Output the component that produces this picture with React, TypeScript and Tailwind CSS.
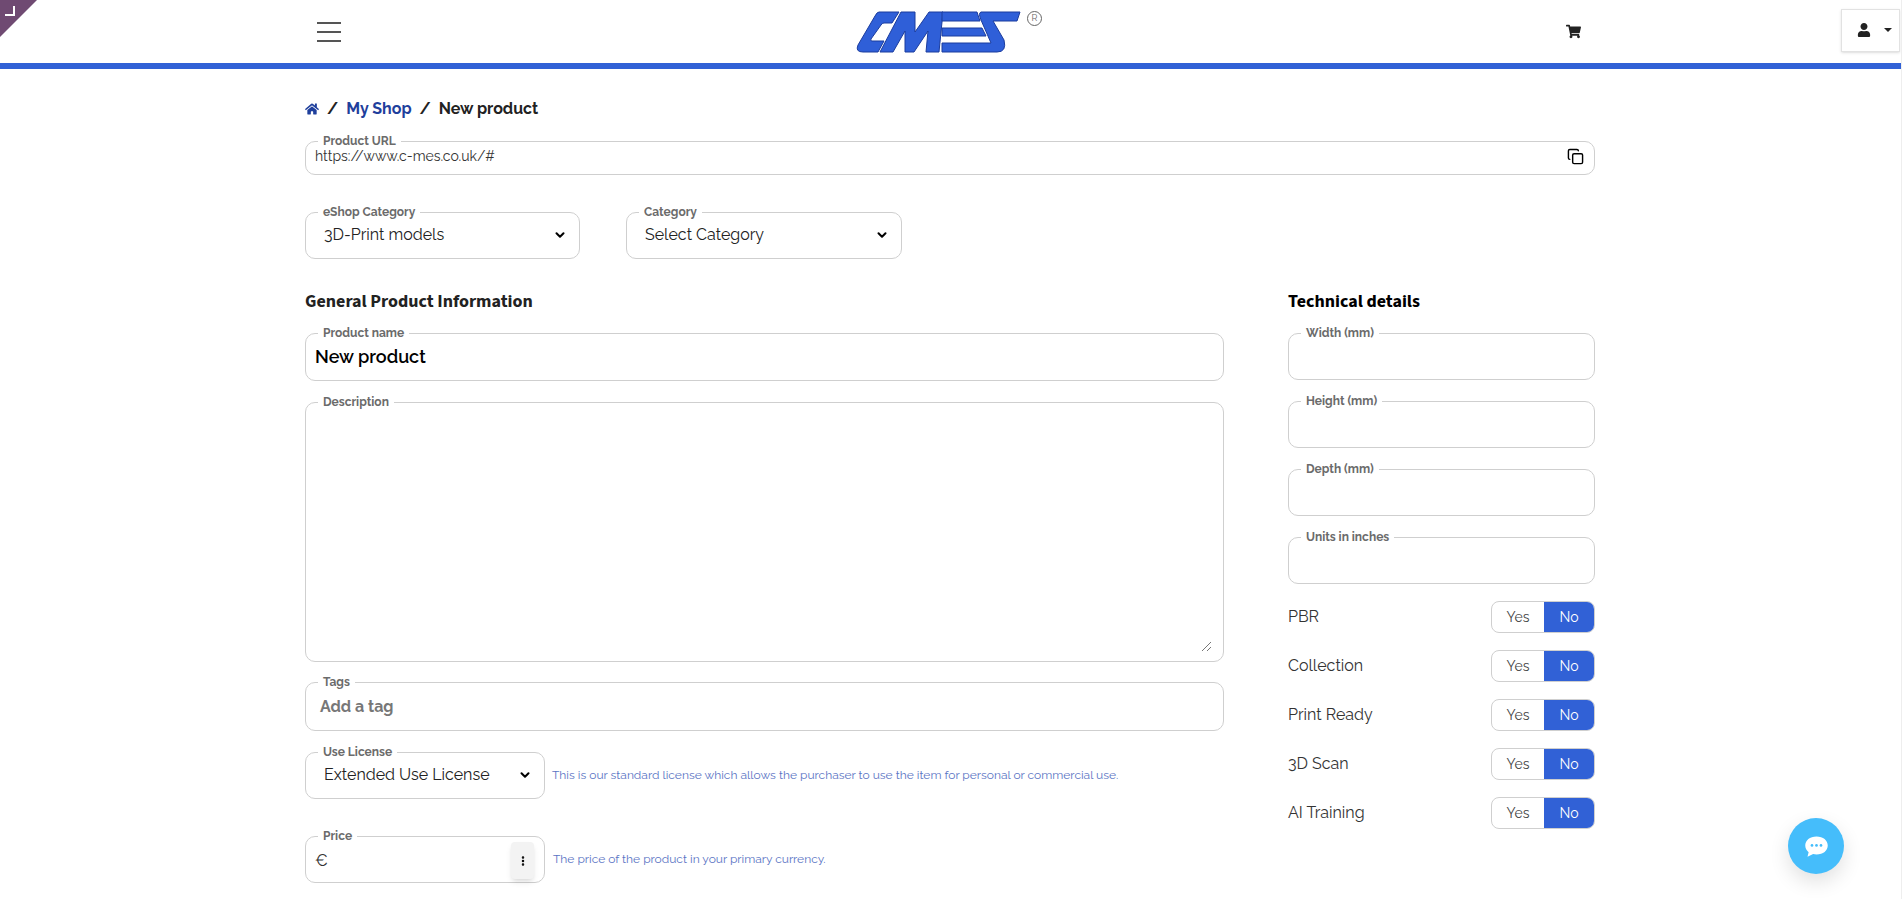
import { Copy, ChevronDown, EllipsisVertical } from "lucide-react";
import { FaHome, FaShoppingCart, FaUser } from "react-icons/fa";
import { ReactNode } from "react";

const raleway = "font-['Raleway','Lato','Noto_Sans',sans-serif]";
const heading = "font-['Source_Sans_Pro','Source_Sans_3','Noto_Sans',sans-serif]";

function Field({
  label,
  className,
  children,
}: {
  label: string;
  className: string;
  children?: ReactNode;
}) {
  return (
    <fieldset className={`rounded-[10px] border border-[#cfcfcf] px-[9px] ${className}`}>
      <legend className="ml-[3px] px-[5px] text-[12px] leading-[12px] font-bold text-[#6b6b6b]">{label}</legend>
      {children}
    </fieldset>
  );
}

function SelectField({ label, value, className }: { label: string; value: string; className: string }) {
  return (
    <Field label={label} className={`h-[53px] ${className}`}>
      <div className="flex h-[34px] items-center justify-between pr-[3px] pl-[9px] text-[16px] text-[#222]">
        <span>{value}</span>
        <ChevronDown className="size-[14px] text-black" strokeWidth={3.5} />
      </div>
    </Field>
  );
}

function Toggle({ label }: { label: string }) {
  return (
    <div className="flex h-[32px] items-center justify-between text-[16px] text-[#333]">
      <span>{label}</span>
      <div className="flex h-[32px] w-[104px] overflow-hidden rounded-[8px] border border-[#cfcfcf] text-[14px]">
        <span className="flex w-[52px] items-center justify-center text-[#444]">Yes</span>
        <span className="flex flex-1 items-center justify-center bg-[#3161d6] text-white">No</span>
      </div>
    </div>
  );
}

export default function App() {
  return (
    <div className={`relative min-h-[899px] overflow-hidden bg-white ${raleway}`}>
      {/* corner ribbon */}
      <div className="absolute top-0 left-0 size-[37px] bg-[#6f4a72] [clip-path:polygon(0_0,100%_0,0_100%)]">
        <div className="absolute top-[6px] left-[5px] h-[10px] w-[10px] border-r-2 border-b-2 border-white" />
      </div>

      <header className="mr-[1px] h-[69px] border-b-[6px] border-[#3161d6]">
        <div className="flex h-full items-center pl-[317px]">
          <div className="flex w-[24px] flex-col gap-[7px]">
            <span className="h-[2px] bg-[#555]" />
            <span className="h-[2px] bg-[#555]" />
            <span className="h-[2px] bg-[#555]" />
          </div>
          <svg viewBox="-1 -1 165 42" className="ml-[515px] h-[42px] w-[165px]">
            <g fill="#2f5fd8" stroke="#1b3c9e" strokeWidth="1" strokeLinejoin="round">
              <path d="M22 0H42L35 11H27Q25 11 24 13L14 27Q13 29 15 29H27L21 40H6Q-2 40 1 33L18 4Q20 0 22 0Z" />
              <path d="M44 0H58L58 20 72 0H86L82 40H69L71 19 57 40H48L48 19 36 40H23Z" />
              <path d="M85 0H120L123 9H85ZM85 16H125L129 24H85Z" />
              <path d="M124 0H163L160 9H136L147 28Q150 40 140 40H85V31H134L124 8Q121 1 124 0Z" />
            </g>
          </svg>
          <div className="mb-[26px] ml-[6px] flex size-[15px] items-center justify-center rounded-full border border-[#666] text-[9px] text-[#666]">
            R
          </div>
          <FaShoppingCart className="ml-[524px] size-[15px] text-[#222]" />
          <div className="mb-[3px] ml-[260px] flex h-[43px] w-[59px] items-center gap-[13px] border border-[#e2e2e2] pl-[15px] shadow-sm">
            <FaUser className="size-[14px] text-[#222]" />
            <span className="border-x-[4px] border-t-[4px] border-x-transparent border-t-[#222]" />
          </div>
        </div>
      </header>

      <main className="ml-[305px] w-[1290px]">
        <nav className="mt-[30px] flex h-[20px] items-center gap-[8px] text-[16px] font-bold">
          <FaHome className="size-[14px] text-[#1f3f9c]" />
          <span className="text-[#222]">/</span>
          <span className="text-[#1f3f9c]">My Shop</span>
          <span className="text-[#222]">/</span>
          <span className="text-[#222]">New product</span>
        </nav>

        <Field label="Product URL" className="mt-[16px] h-[40px]">
          <div className="flex h-[19px] items-center justify-between pr-[1px] text-[14px] text-[#333]">
            <span>https://www.c-mes.co.uk/#</span>
            <Copy className="size-[17px] text-black" />
          </div>
        </Field>

        <div className="mt-[31px] flex gap-[46px]">
          <SelectField label="eShop Category" value="3D-Print models" className="w-[275px]" />
          <SelectField label="Category" value="Select Category" className="w-[276px]" />
        </div>

        <div className="mt-[32px] flex justify-between">
          <section className="w-[919px]">
            <h2 className={`${heading} text-[18px] leading-[22px] font-bold text-[#222]`}>
              General Product Information
            </h2>
            <Field label="Product name" className="mt-[14px] h-[54px]">
              <div className="flex h-[34px] items-center text-[18px] font-semibold text-black">New product</div>
            </Field>
            <Field label="Description" className="relative mt-[15px] h-[266px]">
              <svg viewBox="0 0 10 10" className="absolute right-[12px] bottom-[10px] size-[10px] text-[#777]">
                <path d="M1 10 10 1M6 10l4-4" stroke="currentColor" fill="none" />
              </svg>
            </Field>
            <Field label="Tags" className="mt-[14px] h-[55px]">
              <div className="flex h-[38px] items-center pl-[5px] text-[16px] font-bold text-[#777]">Add a tag</div>
            </Field>
            <div className="mt-[15px] flex items-center gap-[7px]">
              <SelectField label="Use License" value="Extended Use License" className="w-[240px]" />
              <p className="mt-[5px] text-[12px] text-[#5a74c4]">
                This is our standard license which allows the purchaser to use the item for personal or commercial use.
              </p>
            </div>
            <div className="mt-[31px] flex items-center gap-[8px]">
              <Field label="Price" className="h-[53px] w-[240px]">
                <div className="flex h-[37px] items-center justify-between pr-[1px] text-[16px] text-[#333]">
                  <span>€</span>
                  <span className="flex h-[37px] w-[23px] items-center justify-center rounded-[4px] bg-[#f3f3f3] shadow-md">
                    <EllipsisVertical className="size-[12px] text-black" strokeWidth={3} />
                  </span>
                </div>
              </Field>
              <p className="mt-[5px] text-[12px] text-[#5a74c4]">The price of the product in your primary currency.</p>
            </div>
          </section>

          <aside className="w-[307px]">
            <h2 className={`${heading} text-[18px] leading-[22px] font-bold text-black`}>Technical details</h2>
            <div className="mt-[14px] flex flex-col gap-[15px]">
              {["Width (mm)", "Height (mm)", "Depth (mm)", "Units in inches"].map((label) => (
                <Field key={label} label={label} className="h-[53px]" />
              ))}
            </div>
            <div className="mt-[17px] flex flex-col gap-[17px]">
              {["PBR", "Collection", "Print Ready", "3D Scan", "AI Training"].map((label) => (
                <Toggle key={label} label={label} />
              ))}
            </div>
          </aside>
        </div>
      </main>

      {/* chat bubble */}
      <button className="absolute top-[818px] left-[1788px] flex size-[56px] items-center justify-center rounded-full bg-[#45bdfb] shadow-[0_8px_20px_rgba(0,0,0,0.12)]">
        <svg viewBox="0 0 24 24" className="size-[27px]">
          <path d="M12 3C6 3 2 6.500 2 11c0 2.400 1.200 4.500 3 6l-1 4 5-2.300c1 .2 2 .3 3 .3 6 0 10-3.500 10-8s-4-8-10-8Z" fill="white" />
          <circle cx="8" cy="11" r="1.200" fill="#45bdfb" />
          <circle cx="12" cy="11" r="1.200" fill="#45bdfb" />
          <circle cx="16" cy="11" r="1.200" fill="#45bdfb" />
        </svg>
      </button>

      {/* page scrollbar edge */}
      <div className="absolute top-0 right-0 h-full w-[1px] bg-[#eee]" />
    </div>
  );
}
